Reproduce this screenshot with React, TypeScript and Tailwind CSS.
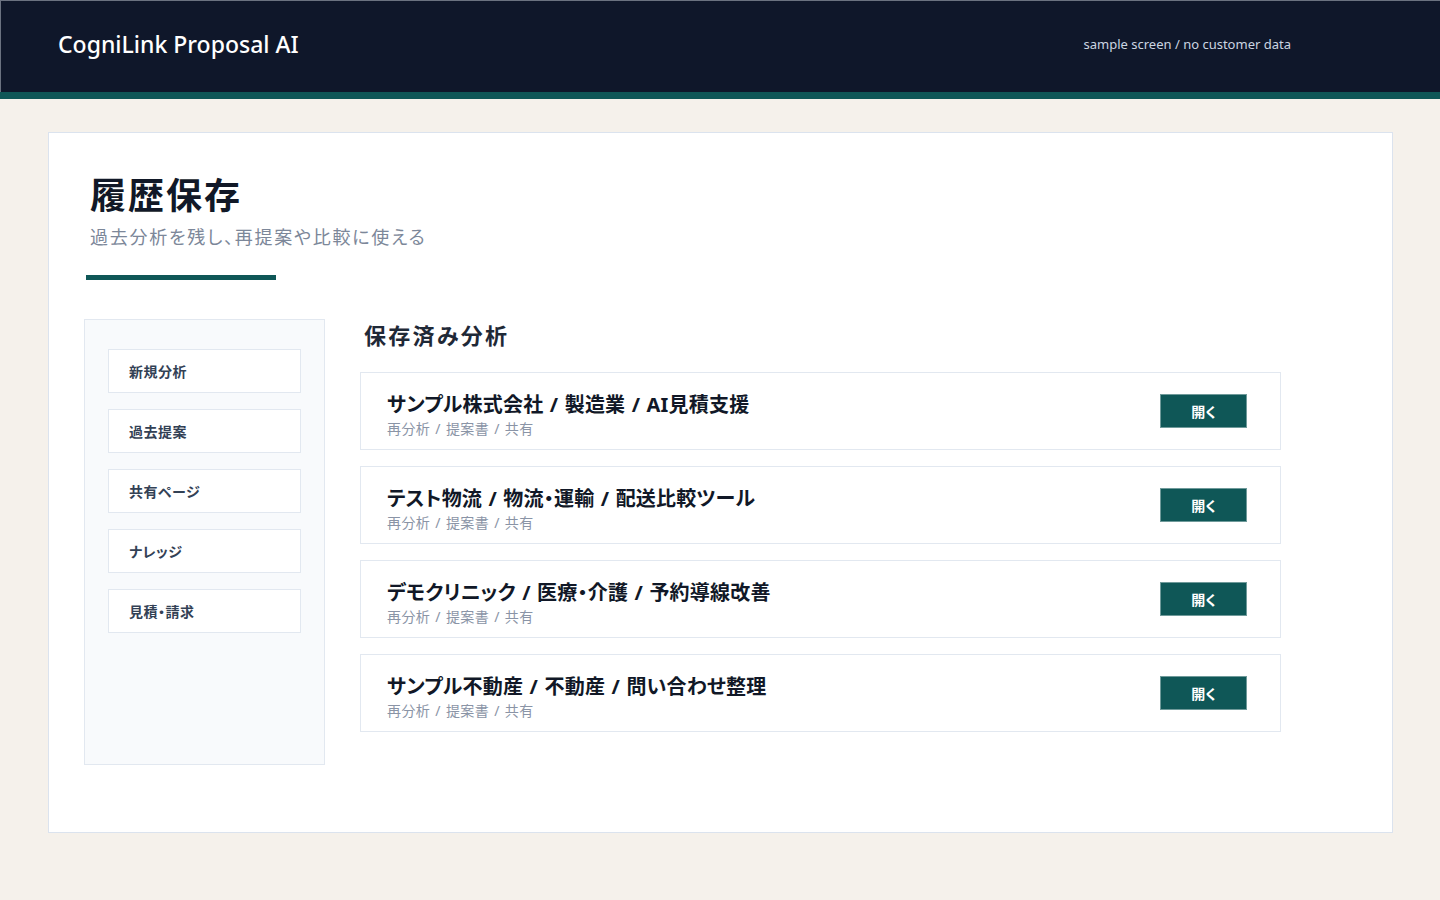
const records = [
  "サンプル株式会社 / 製造業 / AI見積支援",
  "テスト物流 / 物流・運輸 / 配送比較ツール",
  "デモクリニック / 医療・介護 / 予約導線改善",
  "サンプル不動産 / 不動産 / 問い合わせ整理",
];

const menu = ["新規分析", "過去提案", "共有ページ", "ナレッジ", "見積・請求"];

export default function App() {
  return (
    <div
      className="min-h-[900px] bg-[#f5f1eb]"
      style={{ fontFamily: '"Noto Sans", "Noto Sans CJK JP", sans-serif' }}
    >
      <header className="border-b-[7px] border-[#0f5757]">
        <div className="flex h-[92px] items-center justify-between border-t border-l border-[#6b7280] bg-[#0f172a] pb-[5px] pl-[57px] pr-[149px]">
          <div className="text-[23px] font-medium text-white">CogniLink Proposal AI</div>
          <div className="pt-[2px] text-[13px] text-[#cbd5e1]">sample screen / no customer data</div>
        </div>
      </header>

      <main className="pl-12 pr-[47px] pt-[33px]">
        <section className="border border-[#dbe3ee] bg-white px-[35px] pt-[41px] pb-[67px] [font-feature-settings:'palt']">
          <h1 className="pl-[6px] text-[36px] leading-[44px] font-bold tracking-[2px] text-[#111827]">履歴保存</h1>
          <p className="mt-[6px] pl-[6px] text-[18px] leading-[26px] tracking-[1.75px] text-[#7c8799]">
            過去分析を残し、再提案や比較に使える
          </p>
          <div className="mt-[25px] ml-[2px] h-[5px] w-[190px] bg-[#0f5757]" />

          <div className="mt-[39px] flex gap-[35px]">
            <aside className="flex h-[446px] w-[241px] flex-col gap-4 border border-[#e2e8f0] bg-[#f8fafc] px-[23px] pt-[29px]">
              {menu.map((m) => (
                <div
                  key={m}
                  className="flex h-[44px] items-center border border-[#e2e8f0] bg-white px-5 text-[14px] font-semibold tracking-[0.5px] text-[#334155]"
                >
                  {m}
                </div>
              ))}
            </aside>

            <div className="w-[921px]">
              <h2 className="pl-1 text-[22px] leading-[32px] font-bold tracking-[2.3px] text-[#1f2937]">保存済み分析</h2>
              <div className="mt-[21px] flex flex-col gap-4">
                {records.map((r) => (
                  <div
                    key={r}
                    className="flex h-[78px] items-center justify-between border border-[#e2e8f0] bg-white pl-[26px] pr-[33px]"
                  >
                    <div className="pt-2">
                      <div className="text-[20px] leading-7 font-bold tracking-[0.2px] [word-spacing:1px] text-[#111827]">{r}</div>
                      <div className="text-[14px] leading-5 tracking-[0.4px] [word-spacing:1px] text-[#8a94a6]">再分析 / 提案書 / 共有</div>
                    </div>
                    <button className="h-[34px] w-[87px] border border-[#6f9a9a] bg-[#0f5757] text-[14px] font-bold text-white">
                      開く
                    </button>
                  </div>
                ))}
              </div>
            </div>
          </div>
        </section>
      </main>
    </div>
  );
}
